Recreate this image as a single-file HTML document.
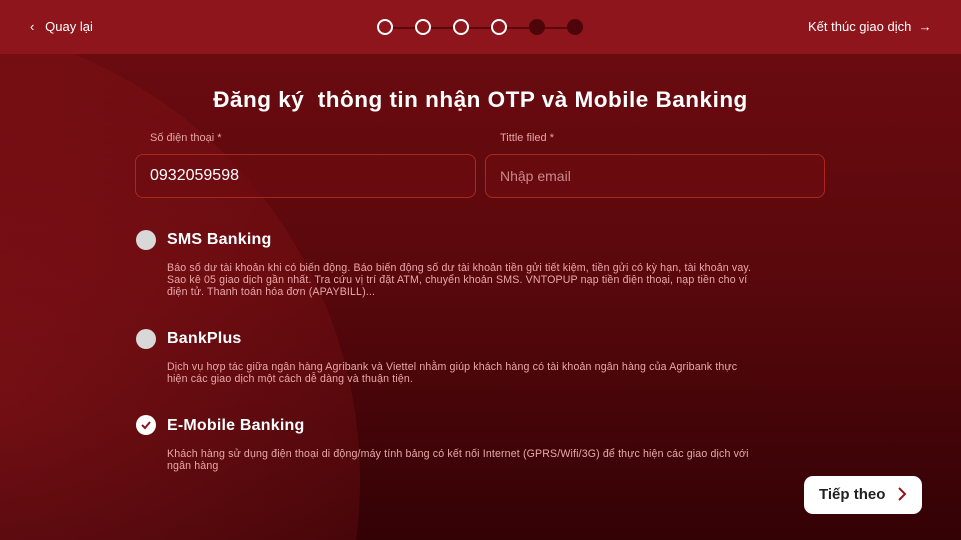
<!DOCTYPE html><html><head><meta charset="utf-8"><style>
*{margin:0;padding:0;box-sizing:border-box}
html,body{width:961px;height:540px;overflow:hidden;background:#4a0609}
body{font-family:"Liberation Sans",sans-serif;color:#fff}
#w{position:relative;width:961px;height:540px;overflow:hidden;background:linear-gradient(180deg,#6e0c11 0%,#5a080c 50%,#330205 100%)}
.circ{position:absolute;left:-560px;top:20px;width:920px;height:920px;border-radius:50%;background:radial-gradient(circle at 60% 40%,rgba(160,25,32,.5),rgba(120,15,20,.2) 60%,rgba(80,8,12,0) 80%)}
.hdr{position:absolute;left:0;top:0;width:961px;height:54px;background:#8d151b}
.a{position:absolute;font-size:13px;top:19px}
.dot{position:absolute;top:19px;width:16px;height:16px;border-radius:50%}
.w{border:2.5px solid #fff;background:#8d151b}
.d{background:#4e0509}
.line{position:absolute;top:27px;left:385px;width:190px;height:2px;background:#5a0a0e}
h1{position:absolute;top:87px;left:0;width:961px;text-align:center;font-size:22.5px;font-weight:bold;letter-spacing:0.5px}
.lbl{position:absolute;top:132px;font-size:11px;color:#e7a4a4}
.inp{position:absolute;top:154px;height:44px;border:1px solid #a82a1e;border-radius:8px;background:rgba(110,12,16,.6);padding:0 14px;line-height:42px;font-size:16px}
.rad{position:absolute;left:136px;width:20px;height:20px;border-radius:50%;background:#d8d8d8}
.t{position:absolute;left:167px;font-size:16px;font-weight:bold;letter-spacing:0.2px}
.p{position:absolute;left:167px;font-size:10.6px;line-height:12px;color:#e9a9a9;width:590px;letter-spacing:0.15px}
.btn{position:absolute;left:804px;top:476px;width:118px;height:38px;background:#fff;border-radius:9px;color:#222;font-size:15px;font-weight:bold;padding:10px 0 0 15px}
</style></head><body><div id="w">
<div class="circ"></div>
<div class="hdr"></div>
<div class="a" style="left:30px">‹&nbsp;&nbsp; Quay lại</div>
<div class="a" style="left:808px">Kết thúc giao dịch &nbsp;→</div>
<div class="line"></div>
<div class="dot w" style="left:377px"></div><div class="dot w" style="left:415px"></div><div class="dot w" style="left:453px"></div><div class="dot w" style="left:491px"></div><div class="dot d" style="left:529px"></div><div class="dot d" style="left:567px"></div>
<h1>Đăng ký&nbsp; thông tin nhận OTP và Mobile Banking</h1>
<div class="lbl" style="left:150px">Số điện thoại *</div>
<div class="lbl" style="left:500px">Tittle filed *</div>
<div class="inp" style="left:135px;width:341px">0932059598</div>
<div class="inp" style="left:485px;width:340px;color:#c88a8a;font-size:14px">Nhập email</div>
<div class="rad" style="top:230px"></div>
<div class="t" style="top:231px">SMS Banking</div>
<div class="p" style="top:262px">Báo số dư tài khoản khi có biến động. Báo biến động số dư tài khoản tiền gửi tiết kiệm, tiền gửi có kỳ hạn, tài khoản vay. Sao kê 05 giao dịch gần nhất. Tra cứu vị trí đặt ATM, chuyển khoản SMS. VNTOPUP nạp tiền điện thoại, nạp tiền cho ví điện tử. Thanh toán hóa đơn (APAYBILL)...</div>
<div class="rad" style="top:329px"></div>
<div class="t" style="top:330px">BankPlus</div>
<div class="p" style="top:361px">Dịch vụ hợp tác giữa ngân hàng Agribank và Viettel nhằm giúp khách hàng có tài khoản ngân hàng của Agribank thực hiện các giao dịch một cách dễ dàng và thuận tiện.</div>
<div class="rad" style="top:415px;background:#fff"><svg width="20" height="20" viewBox="0 0 20 20"><path d="M6 10l3 3 5-6" fill="none" stroke="#8d151b" stroke-width="2"/></svg></div>
<div class="t" style="top:417px">E-Mobile Banking</div>
<div class="p" style="top:448px">Khách hàng sử dụng điện thoại di động/máy tính bảng có kết nối Internet (GPRS/Wifi/3G) để thực hiện các giao dịch với ngân hàng</div>
<div class="btn">Tiếp theo <svg width="12" height="14" viewBox="0 0 12 14" style="margin-left:6px;vertical-align:-2px"><path d="M3 1l6 6-6 6" fill="none" stroke="#8d151b" stroke-width="2"/></svg></div>
</div></body></html>
